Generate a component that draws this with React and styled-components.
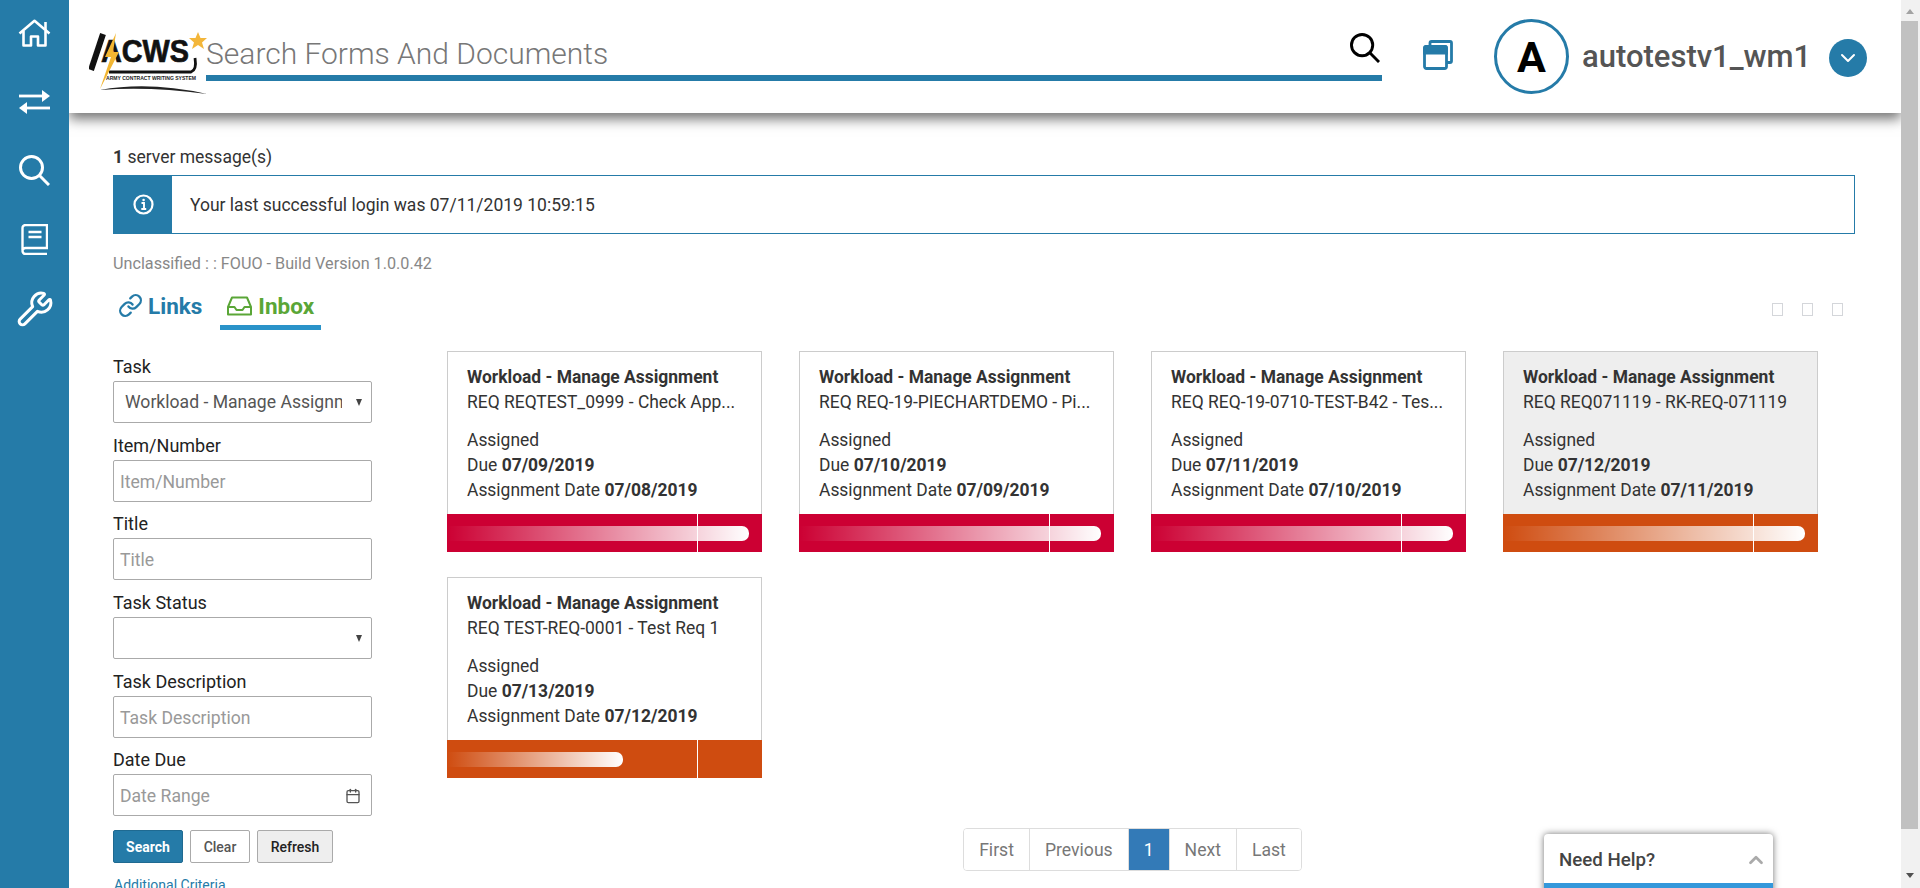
import React from 'react';
import styled, { createGlobalStyle } from 'styled-components';
import { Wrench, ChevronDown, ChevronUp, Calendar, Link as LinkIcon } from 'lucide-react';

const BLUE = '#257ba8';

const GlobalStyle = createGlobalStyle`
  html, body { margin: 0; height: 100%; overflow: hidden; background: #fff; }
  body { font-family: Roboto, "Liberation Sans", sans-serif; color: #333; }
  * { box-sizing: border-box; }
`;

const Shell = styled.div`
  display: flex;
  height: 888px;
  overflow: hidden;
  position: relative;
`;

const Sidebar = styled.nav`
  width: 69px;
  flex: none;
  background: ${BLUE};
  display: flex;
  flex-direction: column;
  align-items: center;
  color: #fff;
`;

const NavItem = styled.div`
  height: 69px;
  width: 100%;
  flex: none;
  display: flex;
  align-items: center;
  justify-content: center;
  &:first-child { margin-top: -2px; }
`;

const Main = styled.main`
  flex: 1;
  min-width: 0;
  overflow: hidden;
`;

const Header = styled.header`
  height: 113px;
  display: flex;
  align-items: flex-start;
  padding: 19px 0 0 20px;
  box-shadow: 0 6px 12px rgba(0, 0, 0, 0.55);
  position: relative;
  background: #fff;
`;

const LogoSvg = styled.svg`
  width: 125px;
  height: 64px;
  flex: none;
  margin-top: 13px;
  margin-right: -8px;
`;

const SearchBar = styled.div`
  width: 1176px;
  height: 62px;
  border-bottom: 6px solid ${BLUE};
  display: flex;
  align-items: center;
  justify-content: space-between;
  padding: 13px 2px 0 0;
  color: #777;
  font-size: 30px;
  font-weight: 300;
`;

const SearchGlyph = styled.svg`
  flex: none;
  margin-top: ${p => p.$lift || 0}px;
`;

const IconSlot = styled.div`
  margin-left: 41px;
  margin-top: 21px;
  color: ${BLUE};
  line-height: 0;
`;

const Avatar = styled.div`
  width: 75px;
  height: 75px;
  flex: none;
  margin-left: 41px;
  border: 3px solid ${BLUE};
  border-radius: 50%;
  display: flex;
  align-items: center;
  justify-content: center;
  color: #000;
  font-size: 43px;
  font-weight: 700;
`;

const UserName = styled.div`
  margin: 19px 0 0 13px;
  color: #555;
  font-size: 31px;
  font-weight: 500;
  line-height: 38px;
`;

const Caret = styled.div`
  width: 38px;
  height: 38px;
  margin: 20px 0 0 18px;
  border-radius: 50%;
  background: ${BLUE};
  color: #fff;
  display: flex;
  align-items: center;
  justify-content: center;
`;

const Content = styled.div`
  padding: 33px 46px 0 44px;
`;

const MessageCount = styled.div`
  font-size: 17.5px;
  line-height: 22px;
  margin-bottom: 7px;
  color: #333;
`;

const Alert = styled.div`
  display: flex;
  align-items: center;
  height: 59px;
  border: 1px solid ${BLUE};
  font-size: 17.5px;
`;

const AlertIcon = styled.div`
  width: 58px;
  height: 100%;
  background: ${BLUE};
  color: #fff;
  display: flex;
  align-items: center;
  justify-content: center;
  margin-right: 18px;
`;

const BuildLine = styled.div`
  color: #888;
  font-size: 16.2px;
  line-height: 20px;
  margin-top: 20px;
`;

const TabsRow = styled.div`
  display: flex;
  align-items: flex-start;
  justify-content: space-between;
  height: 60px;
  margin-top: 10px;
`;

const Tabs = styled.div`
  display: flex;
  gap: 18px;
  padding-left: 5px;
`;

const Tab = styled.div`
  height: 46px;
  display: flex;
  align-items: center;
  gap: ${p => (p.$active ? '6px' : '5px')};
  padding: 2px ${p => (p.$active ? '7px' : '0')} 0;
  font-size: 22.5px;
  font-weight: 700;
  color: ${p => (p.$active ? '#5aa637' : BLUE)};
  border-bottom: ${p => (p.$active ? '5px solid #2a93c9' : '5px solid transparent')};
`;

const Tofus = styled.div`
  display: flex;
  gap: 19px;
  margin: 19px 12px 0 0;
`;

const Tofu = styled.span`
  width: 11px;
  height: 13px;
  border: 1px solid #d4d6da;
`;

const Inbox = styled.div`
  display: grid;
  grid-template-columns: 259px 1fr;
  column-gap: 75px;
  margin-top: 7px;
`;

const Filters = styled.form`
  display: flex;
  flex-direction: column;
  margin-top: 3px;
`;

const Field = styled.label`
  display: block;
  height: 78.7px;
  font-size: 18px;
  color: #222;
  line-height: 26px;
`;

const Control = styled.div`
  height: 42px;
  margin-top: 1px;
  border: 1px solid #aaa;
  border-radius: 2px;
  display: flex;
  align-items: center;
  justify-content: space-between;
  padding: 2px 10px 0 6px;
  font-size: 17.6px;
  color: #999;
  white-space: nowrap;
  overflow: hidden;
`;

const SelectControl = styled(Control)`
  padding: 0 8px 0 11px;
  color: #555;
`;

const SelectText = styled.span`
  overflow: hidden;
  width: 217px;
`;

const SelectArrow = styled.span`
  width: 0;
  height: 0;
  border-left: 3.5px solid transparent;
  border-right: 3.5px solid transparent;
  border-top: 7px solid #444;
  margin-left: auto;
  margin-right: 1px;
`;

const ButtonRow = styled.div`
  display: flex;
  gap: 7px;
  margin-top: 4px;
`;

const Button = styled.button`
  height: 33px;
  width: ${p => p.$w}px;
  flex: none;
  padding: 1px 0 0;
  border-radius: 2px;
  font-family: inherit;
  font-size: 14px;
  font-weight: ${p => (p.$variant === 'primary' ? 700 : 500)};
  border: 1px solid ${p => (p.$variant === 'primary' ? '#1f6a91' : '#aaa')};
  background: ${p => (p.$variant === 'primary' ? BLUE : p.$variant === 'muted' ? '#eee' : '#fff')};
  color: ${p => (p.$variant === 'primary' ? '#fff' : p.$variant === 'muted' ? '#222' : '#555')};
`;

const MoreLink = styled.div`
  margin-top: 12px;
  padding-left: 1px;
  font-size: 14px;
  line-height: 20px;
  color: ${BLUE};
`;

const Results = styled.section`
  display: flex;
  flex-direction: column;
  width: 1371px;
`;

const CardGrid = styled.div`
  display: grid;
  grid-template-columns: repeat(4, 314.5px);
  grid-auto-rows: 201px;
  column-gap: 37.5px;
  row-gap: 25px;
`;

const Card = styled.article`
  display: flex;
  flex-direction: column;
  border: 1px solid #ccc;
  background: ${p => (p.$selected ? '#eee' : '#fff')};
  position: relative;
`;

const CardBody = styled.div`
  flex: 1;
  padding: 13px 19px 0;
  font-size: 17.45px;
  line-height: 25px;
  color: #333;
  white-space: nowrap;
`;

const CardTitle = styled.div`
  font-weight: 700;
`;

const CardStatus = styled.div`
  margin-top: 13px;
`;

const CardBar = styled.div`
  height: 38px;
  margin: 0 -1px -1px;
  background: ${p => p.$color};
  display: flex;
  align-items: center;
  position: relative;
`;

const BarFill = styled.div`
  height: 15px;
  margin-top: 1px;
  border-radius: 0 7px 7px 0;
  background: linear-gradient(to right, rgba(255, 255, 255, 0), #fff);
`;

const BarMark = styled.span`
  position: absolute;
  left: 250px;
  top: 0;
  bottom: 0;
  width: 1px;
  background: #fff;
`;

const Pager = styled.div`
  align-self: center;
  display: flex;
  height: 43px;
  margin-top: 50px;
  border: 1px solid #ddd;
  border-radius: 4px;
  overflow: hidden;
`;

const PageCell = styled.div`
  padding: 0 15px;
  display: flex;
  align-items: center;
  font-size: 17.6px;
  color: ${p => (p.$active ? '#fff' : '#777')};
  background: ${p => (p.$active ? '#337ab7' : '#fff')};
  & + & { border-left: 1px solid #ddd; }
`;

const HelpBox = styled.div`
  position: absolute;
  left: 1544px;
  top: 834px;
  width: 229px;
  height: 60px;
  background: #fff;
  border-radius: 4px 4px 0 0;
  border-bottom: 11px solid #3498db;
  box-shadow: 0 0 7px rgba(0, 0, 0, 0.55);
  display: flex;
  align-items: center;
  justify-content: space-between;
  padding: 2px 6px 0 15px;
  font-size: 18.7px;
  font-weight: 500;
  color: #444;
`;

const Scrollbar = styled.div`
  width: 19px;
  flex: none;
  background: #f1f1f1;
  display: flex;
  flex-direction: column;
  align-items: center;
  padding: 0 2px 0 0;
`;

const ScrollThumb = styled.div`
  flex: 1;
  width: 17px;
  margin: 21px 0 59px;
  background: #c1c1c1;
`;

const ArrowUp = styled.span`
  position: absolute;
  top: 9px;
  border-left: 4.5px solid transparent;
  border-right: 4.5px solid transparent;
  border-bottom: 5px solid #a3a3a3;
`;

const ArrowDown = styled.span`
  position: absolute;
  top: 873px;
  border-left: 4.5px solid transparent;
  border-right: 4.5px solid transparent;
  border-top: 5px solid #505050;
`;

function Logo() {
  return (
    <LogoSvg viewBox="0 0 125 64">
      <path d="M2 38 L14 2" stroke="#111" strokeWidth="6" fill="none" />
      <text x="12" y="30" fontFamily="Liberation Sans" fontWeight="700" fontSize="32" textLength="88" lengthAdjust="spacingAndGlyphs" fill="#111" stroke="#111" strokeWidth="0.7">ACWS</text>
      <path d="M20 40 H102 Q108 38 106 26" stroke="#111" strokeWidth="2.8" fill="none" />
      <path d="M27 1 L16 25 L22 25 L11 57 L30 20 L24 20 Z" fill="#f2b632" />
      <polygon points="109,0 111.5,6 118,6 113,10.5 115,17 109,13 103,17 105,10.5 100,6 106.5,6" fill="#f3b63a" />
      <text x="17" y="48" fontFamily="Liberation Sans" fontWeight="700" fontSize="5" textLength="90" lengthAdjust="spacingAndGlyphs" fill="#222">ARMY CONTRACT WRITING SYSTEM</text>
      <path d="M11 58 Q60 49 118 62 Q60 54 11 58 Z" fill="#222" />
    </LogoSvg>
  );
}

function HomeIcon() {
  return (
    <svg width="33" height="28" viewBox="0 0 33 28" fill="none" stroke="currentColor" strokeWidth="2.6" strokeLinejoin="round">
      <path d="M1.5 14.5 L16.5 1.8 L31.5 14.5" />
      <path d="M27.5 3 V11" />
      <path d="M5.5 12 V26.5 H13 V17.5 H20 V26.5 H27.5 V12" />
    </svg>
  );
}

function TransferIcon() {
  return (
    <svg width="31" height="24" viewBox="0 0 31 24" fill="currentColor">
      <rect x="0" y="4.6" width="24" height="2.8" />
      <polygon points="23,0 31,6 23,12" />
      <rect x="7" y="16.6" width="24" height="2.8" />
      <polygon points="8,12 0,18 8,24" />
    </svg>
  );
}

function SearchIcon({ size, color, lift }) {
  return (
    <SearchGlyph $lift={lift} width={size} height={size} viewBox="0 0 31 31" fill="none" stroke={color} strokeWidth="3">
      <circle cx="12.5" cy="12.5" r="11" />
      <path d="M20.5 20.5 L30 30" />
    </SearchGlyph>
  );
}

function BookIcon() {
  return (
    <svg width="27" height="31" viewBox="0 0 27 31" fill="none" stroke="currentColor" strokeWidth="2.4">
      <path d="M1.5 26 V4 a3 3 0 0 1 3 -3 H26 V24 H4.5 a3 3 0 0 0 0 6 H26" />
      <path d="M7.5 8 H20.5 M7.5 13 H20.5" />
    </svg>
  );
}

function InfoIcon() {
  return (
    <svg width="21" height="21" viewBox="0 0 21 21" fill="none" stroke="currentColor">
      <circle cx="10.5" cy="10.5" r="9" strokeWidth="2.2" />
      <path d="M8.5 9 H11 V15 M8.3 15 H13.2" strokeWidth="1.9" />
      <circle cx="10.6" cy="6" r="1.3" fill="currentColor" stroke="none" />
    </svg>
  );
}

function InboxIcon() {
  return (
    <svg width="25" height="20" viewBox="0 0 25 20" fill="none" stroke="currentColor" strokeWidth="2" strokeLinejoin="round">
      <path d="M1 11 L5 1.5 H20 L24 11 V18.5 H1 Z" />
      <path d="M1 11 H7.5 L9.5 14 H15.5 L17.5 11 H24" />
    </svg>
  );
}

function WindowsIcon() {
  return (
    <svg width="30" height="30" viewBox="0 0 30 30" fill="none" stroke={BLUE} strokeWidth="2.8">
      <path d="M7 6 V3 a1.5 1.5 0 0 1 1.5 -1.5 H27 a1.5 1.5 0 0 1 1.5 1.5 V21 a1.5 1.5 0 0 1 -1.5 1.5 H24" />
      <rect x="1.5" y="6.5" width="22" height="22" rx="2" />
      <path d="M1.5 8 a1.5 1.5 0 0 1 1.5 -1.5 H22 a1.5 1.5 0 0 1 1.5 1.5 V13 H1.5 Z" fill={BLUE} />
    </svg>
  );
}

const FIELDS = [
  { label: 'Task', select: 'Workload - Manage Assignment' },
  { label: 'Item/Number', placeholder: 'Item/Number' },
  { label: 'Title', placeholder: 'Title' },
  { label: 'Task Status', select: '' },
  { label: 'Task Description', placeholder: 'Task Description' },
  { label: 'Date Due', placeholder: 'Date Range', calendar: true },
];

const RED = '#cc0033';
const ORANGE = '#cf4c10';

const CARDS = [
  { req: 'REQ REQTEST_0999 - Check App...', due: '07/09/2019', assigned: '07/08/2019', color: RED, fill: 302 },
  { req: 'REQ REQ-19-PIECHARTDEMO - Pi...', due: '07/10/2019', assigned: '07/09/2019', color: RED, fill: 302 },
  { req: 'REQ REQ-19-0710-TEST-B42 - Tes...', due: '07/11/2019', assigned: '07/10/2019', color: RED, fill: 302 },
  { req: 'REQ REQ071119 - RK-REQ-071119', due: '07/12/2019', assigned: '07/11/2019', color: ORANGE, fill: 302, selected: true },
  { req: 'REQ TEST-REQ-0001 - Test Req 1', due: '07/13/2019', assigned: '07/12/2019', color: ORANGE, fill: 176 },
];

export default function App() {
  return (
    <>
      <GlobalStyle />
      <Shell>
        <Sidebar>
          <NavItem><HomeIcon /></NavItem>
          <NavItem><TransferIcon /></NavItem>
          <NavItem><SearchIcon size={31} color="#fff" /></NavItem>
          <NavItem><BookIcon /></NavItem>
          <NavItem><Wrench size={38} strokeWidth={1.9} /></NavItem>
        </Sidebar>
        <Main>
          <Header>
            <Logo />
            <SearchBar>
              <span>Search Forms And Documents</span>
              <SearchIcon size={30} color="#000" lift={-12} />
            </SearchBar>
            <IconSlot><WindowsIcon /></IconSlot>
            <Avatar>A</Avatar>
            <UserName>autotestv1_wm1</UserName>
            <Caret><ChevronDown size={24} /></Caret>
          </Header>
          <Content>
            <MessageCount><b>1</b> server message(s)</MessageCount>
            <Alert>
              <AlertIcon><InfoIcon /></AlertIcon>
              Your last successful login was 07/11/2019 10:59:15
            </Alert>
            <BuildLine>Unclassified : : FOUO - Build Version 1.0.0.42</BuildLine>
            <TabsRow>
              <Tabs>
                <Tab><LinkIcon size={25} strokeWidth={2.2} />Links</Tab>
                <Tab $active><InboxIcon />Inbox</Tab>
              </Tabs>
              <Tofus><Tofu /><Tofu /><Tofu /></Tofus>
            </TabsRow>
            <Inbox>
              <Filters>
                {FIELDS.map(f => (
                  <Field key={f.label}>
                    {f.label}
                    {f.select !== undefined ? (
                      <SelectControl>
                        <SelectText>{f.select}</SelectText>
                        <SelectArrow />
                      </SelectControl>
                    ) : (
                      <Control>
                        {f.placeholder}
                        {f.calendar && <Calendar size={16} color="#555" />}
                      </Control>
                    )}
                  </Field>
                ))}
                <ButtonRow>
                  <Button type="button" $variant="primary" $w={70}>Search</Button>
                  <Button type="button" $w={60}>Clear</Button>
                  <Button type="button" $variant="muted" $w={76}>Refresh</Button>
                </ButtonRow>
                <MoreLink>Additional Criteria</MoreLink>
              </Filters>
              <Results>
                <CardGrid>
                  {CARDS.map(c => (
                    <Card key={c.due} $selected={c.selected}>
                      <CardBody>
                        <CardTitle>Workload - Manage Assignment</CardTitle>
                        <div>{c.req}</div>
                        <CardStatus>Assigned</CardStatus>
                        <div>Due <b>{c.due}</b></div>
                        <div>Assignment Date <b>{c.assigned}</b></div>
                      </CardBody>
                      <CardBar $color={c.color}>
                        <BarFill style={{ width: c.fill }} />
                        <BarMark />
                      </CardBar>
                    </Card>
                  ))}
                </CardGrid>
                <Pager>
                  <PageCell>First</PageCell>
                  <PageCell>Previous</PageCell>
                  <PageCell $active>1</PageCell>
                  <PageCell>Next</PageCell>
                  <PageCell>Last</PageCell>
                </Pager>
              </Results>
            </Inbox>
          </Content>
        </Main>
        <Scrollbar>
          <ArrowUp />
          <ScrollThumb />
          <ArrowDown />
        </Scrollbar>
        <HelpBox>Need Help?<ChevronUp size={22} color="#aaa" strokeWidth={3} /></HelpBox>
      </Shell>
    </>
  );
}
